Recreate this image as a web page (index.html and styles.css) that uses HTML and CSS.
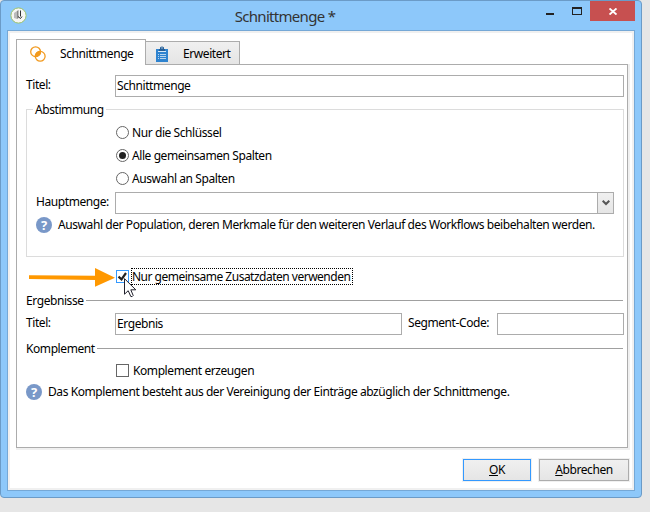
FILE: index.html
```html
<!DOCTYPE html>
<html lang="de">
<head>
<meta charset="utf-8">
<title>Schnittmenge</title>
<link rel="stylesheet" href="styles.css">
</head>
<body>
<div class="window">
  <header class="titlebar">
    <svg class="app-icon" width="17" height="17" viewBox="0 0 17 17"><circle cx="8.500" cy="8.500" r="7.600" fill="#f6f6f4" stroke="#9fc46a"/><path d="M4 6l3-2v8l-3-1z" fill="#bbb"/><path d="M7 4l1.500-1v8L7 12z" fill="#888"/><path d="M10.500 3.500v6M8 9.500l2.500 2 1.500-2" stroke="#333" fill="none"/></svg>
    <h1>Schnittmenge *</h1>
    <div class="controls">
      <span class="min"></span>
      <span class="max"></span>
      <span class="close"><svg width="8" height="7" viewBox="0 0 8 7"><path d="M.500.500l7 6M7.500.500l-7 6" stroke="#fff" stroke-width="1.900"/></svg></span>
    </div>
  </header>
  <main class="client">
    <nav class="tabs">
      <div class="tab active">
        <svg width="16" height="16" viewBox="0 0 16 16"><circle cx="5.600" cy="5.700" r="4.900" fill="none" stroke="#f29a1f" stroke-width="1.300"/><circle cx="10.200" cy="10.300" r="4.900" fill="none" stroke="#f29a1f" stroke-width="1.300"/><path d="M5.300 10.600A4.900 4.900 0 0 1 10.500 5.400 4.900 4.900 0 0 1 5.300 10.600z" fill="#f29a1f" stroke="#f29a1f" stroke-width="1.200"/></svg>
        <span>Schnittmenge</span>
      </div>
      <div class="tab">
        <svg width="12" height="16" viewBox="0 0 12 16"><path d="M0 3h12v13H0z" fill="#2e83cf"/><path d="M4 3V1.500Q6-.7 8 1.500V3h1v2H3V3z" fill="#255e96"/><path d="M5.300 1.500h1.400v1H5.300zM2 5h8v1H2z" fill="#d9e8f5"/><path d="M2 8.500h1M4 8.500h6M2 10.500h1M4 10.500h6M2 12.500h1M4 12.500h6" stroke="#b8d5ee"/></svg>
        <span>Erweitert</span>
      </div>
    </nav>
    <section class="panel">
      <div class="row first"><label>Titel:</label><div class="input wide">Schnittmenge</div></div>
      <div class="group">
        <span class="legend">Abstimmung</span>
        <div class="option"><i class="radio"></i><span>Nur die Schlüssel</span></div>
        <div class="option"><i class="radio on"></i><span>Alle gemeinsamen Spalten</span></div>
        <div class="option"><i class="radio"></i><span>Auswahl an Spalten</span></div>
        <div class="row combo-row"><label>Hauptmenge:</label><div class="combo"><span class="drop"><svg width="8" height="6" viewBox="0 0 8 6"><path d="M.7.700L4 4l3.300-3.300" fill="none" stroke="#555" stroke-width="2"/></svg></span></div></div>
        <div class="help"><i class="question">?</i><span>Auswahl der Population, deren Merkmale für den weiteren Verlauf des Workflows beibehalten werden.</span></div>
      </div>
      <div class="check common">
        <svg class="arrow" width="86" height="20" viewBox="0 0 86 20"><path d="M0 7.200l66 .6V0l20 9.800-20 9V12L0 11z" fill="#ff9800"/></svg>
        <i class="box focus"><svg width="11" height="11" viewBox="0 0 11 11"><path d="M1.500 5.700l3 2.600L9 2" fill="none" stroke="#222" stroke-width="2.200"/></svg></i>
        <span class="focused">Nur gemeinsame Zusatzdaten verwenden</span>
        <svg class="cursor" width="13" height="20" viewBox="0 0 13 20"><path d="M.5.700v15.500l3.700-3.500 2.600 5.800q1.500.6 2.400-1L6.800 11.800h5z" fill="#fff" stroke="#20202c"/></svg>
      </div>
      <div class="heading results"><span>Ergebnisse</span></div>
      <div class="row result-row"><label>Titel:</label><div class="input result">Ergebnis</div><label class="segment">Segment-Code:</label><div class="input code"></div></div>
      <div class="heading complement"><span>Komplement</span></div>
      <div class="check generate"><i class="box"></i><span class="plain">Komplement erzeugen</span></div>
      <div class="help last"><i class="question">?</i><span>Das Komplement besteht aus der Vereinigung der Einträge abzüglich der Schnittmenge.</span></div>
    </section>
    <footer class="buttons">
      <button class="ok"><u>O</u>K</button>
      <button class="cancel"><u>A</u>bbrechen</button>
    </footer>
  </main>
</div>
</body>
</html>
```
FILE: styles.css
```css
* { box-sizing: border-box; }
body {
  margin: 0;
  height: 512px;
  overflow: hidden;
  background: #e6e6e6;
  font: 12px/16px "Noto Sans", "Open Sans", sans-serif;
  letter-spacing: -.42px;
  color: #000;
  white-space: nowrap;
}
i { font-style: normal; flex: none; }
svg { display: block; flex: none; }
.window {
  width: 642px;
  height: 498px;
  padding: 0 6px 7px 6px;
  border: 1px solid #6b9bc7;
  border-radius: 4px;
  background: #8dc8fa;
}
.titlebar { height: 29px; display: flex; position: relative; }
.app-icon { margin: 6px 0 0 3px; }
h1 {
  position: absolute;
  left: 0;
  right: 72px;
  top: 4px;
  margin: 0;
  text-align: center;
  font-size: 15px;
  line-height: 22px;
  font-weight: 400;
  letter-spacing: -.7px;
  color: #333;
}
.controls { margin-left: auto; display: flex; align-items: flex-start; }
.min { width: 8px; height: 2px; background: #222; margin: 12px 18px 0 0; }
.max { width: 10px; height: 8px; border: 1px solid #222; border-top-width: 2px; margin: 6px 8px 0 0; }
.close { width: 45px; height: 20px; display: grid; place-items: center; background: #c75050; }
.client {
  width: 628px;
  height: 461px;
  border: 1px solid #75a8d6;
  box-shadow: inset 0 0 0 2px #f0f0f0;
  background: #fff;
  padding: 8px 5px 0 8px;
}
.tabs { display: flex; align-items: flex-end; height: 25px; }
.tab {
  width: 94px;
  height: 23px;
  display: flex;
  align-items: center;
  border: 1px solid #acacac;
  border-width: 1px 1px 0 0;
  background: linear-gradient(#f0f0f0, #e5e5e5);
  padding: 1px 0 0 10px;
}
.tab span { margin-left: 15px; }
.tab.active {
  width: 130px;
  height: 26px;
  margin-bottom: -1px;
  padding: 2px 0 0 13px;
  border-left-width: 1px;
  background: #fff;
  z-index: 1;
}
.tab.active span { margin-left: 14px; }
.panel {
  width: 612px;
  height: 384px;
  border: 1px solid #acacac;
  box-shadow: 1px 1px 0 1px #f0f0f0;
  padding: 10px 3px 0 9px;
  clip-path: inset(0 -2px -2px 0);
}
.row { display: flex; height: 22px; align-items: center; }
.row label { width: 89px; flex: none; padding-bottom: 2px; }
.input { height: 22px; border: 1px solid #acacac; padding: 1px 0 0 1px; line-height: 17px; }
.input.wide { width: 509px; }
.group {
  position: relative;
  width: 598px;
  height: 148px;
  margin-top: 12px;
  border: 1px solid #dcdcdc;
  padding: 11px 9px 0;
}
.legend { position: absolute; left: 6px; top: -8px; padding: 0 2px; background: #fff; }
.option { height: 23px; display: flex; align-items: center; padding-left: 80px; }
.option span { margin-left: 3px; }
.radio { width: 13px; height: 13px; border: 1px solid #666; border-radius: 50%; display: grid; place-items: center; }
.radio.on::after { content: ""; width: 7px; height: 7px; border-radius: 50%; background: #212121; }
.combo-row { margin-top: 2px; }
.combo-row label { width: 79px; }
.combo { width: 499px; height: 22px; border: 1px solid #acacac; display: flex; justify-content: flex-end; }
.drop { width: 16px; border-left: 1px solid #acacac; background: linear-gradient(#f0f0f0, #e5e5e5); display: grid; place-items: center; }
.help { display: flex; height: 16px; align-items: center; margin-top: 3px; }
.help span { margin-left: 6px; }
.question {
  width: 16px;
  height: 16px;
  border-radius: 50%;
  background: #7998c8;
  color: #fff;
  font-size: 13px;
  font-weight: 700;
  line-height: 16px;
  text-align: center;
}
.check { position: relative; display: flex; height: 17px; align-items: center; padding-left: 90px; }
.common { margin-top: 11px; }
.box { width: 13px; height: 13px; border: 1px solid #666; }
.box.focus { border-color: #3399ff; }
.focused {
  width: 222px;
  height: 17px;
  margin-left: 2px;
  border: 1px dotted #000;
  padding-left: 0;
  line-height: 15px;
  letter-spacing: -.5px;
}
.plain { margin-left: 4px; }
.arrow { position: absolute; left: 3px; top: 0; }
.cursor { position: absolute; left: 98px; top: 10px; }
.heading { display: flex; align-items: center; height: 17px; }
.heading::after { content: ""; height: 1px; flex: 1; background: #a0a0a0; margin: 0 1px 0 2px; }
.results { margin-top: 7px; }
.result-row { margin-top: 4px; }
.input.result { width: 287px; }
.row .segment { width: 95px; padding-left: 6px; }
.input.code { width: 127px; }
.complement { margin-top: 5px; }
.generate { margin-top: 5px; }
.last { margin-top: 5px; }
.buttons { display: flex; justify-content: flex-end; gap: 8px; padding: 11px 0 0; }
button {
  height: 22px;
  border: 1px solid #acacac;
  background: linear-gradient(#f0f0f0, #e5e5e5);
  box-shadow: 0 0 0 1px #f0f0f0;
  padding: 0;
  font: inherit;
  letter-spacing: inherit;
  color: #000;
}
.ok { width: 68px; border-color: #3399ff; }
.cancel { width: 90px; }
```
